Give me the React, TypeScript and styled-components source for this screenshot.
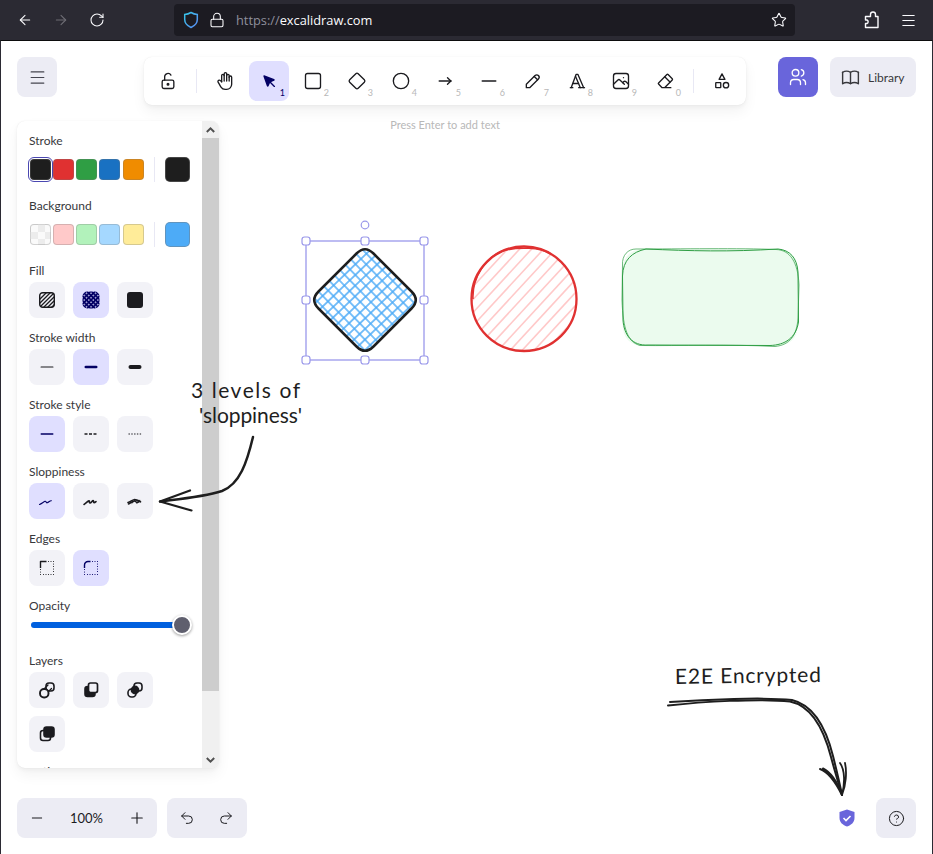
import React from "react"
import styled, { createGlobalStyle } from "styled-components"
import { ArrowLeft, ArrowRight, Lock, Menu, Minus, Plus, RotateCw, Star, Undo2, Redo2, CircleHelp } from "lucide-react"

const GlobalStyle = createGlobalStyle`
  html, body {
    margin: 0;
    padding: 0;
    background: #fff;
  }
  * {
    box-sizing: border-box;
  }
`

const Page = styled.div`
  position: relative;
  width: 933px;
  height: 854px;
  overflow: hidden;
  display: flex;
  flex-direction: column;
  font-family: "Lato", "Noto Sans", sans-serif;
  color: #1b1b1f;
`

/* browser chrome */
const BrowserBar = styled.div`
  flex: none;
  height: 40px;
  background: #2b2a33;
  display: flex;
  align-items: center;
  padding: 0 16px 0 17px;
`

const NavIcon = styled.span<{ $dim?: boolean; $space?: number; $lead?: number }>`
  display: flex;
  width: 16px;
  height: 16px;
  margin-left: ${(p) => p.$lead ?? 0}px;
  margin-right: ${(p) => p.$space ?? 20}px;
  color: ${(p) => (p.$dim ? "#6e6d75" : "#fbfbfe")};
`

const UrlBox = styled.div`
  width: 621px;
  height: 32px;
  padding: 0 8px 0 9px;
  border-radius: 4px;
  background: #1c1b22;
  display: flex;
  align-items: center;
  font-family: "Open Sans", sans-serif;
  font-size: 12.8px;
`

const UrlScheme = styled.span`
  color: #8f8f9d;
`

const UrlHost = styled.span`
  color: #fbfbfe;
`

const UrlText = styled.div`
  margin-left: 11px;
  flex: 1;
`

const BarRight = styled.div`
  margin-left: auto;
  display: flex;
  align-items: center;
  gap: 19px;
  color: #fbfbfe;
`

/* stage */
const Stage = styled.div`
  flex: 1;
  min-height: 0;
  display: flex;
  flex-direction: column;
  padding: 16px;
  background: #fff;
  border-top: 1px solid #0c0c0d;
  border-left: 1px solid #2b2a33;
  border-right: 1px solid #2b2a33;
`

const TopRow = styled.div`
  flex: none;
  height: 48px;
  display: flex;
  align-items: flex-start;
`

const SquareButton = styled.div<{ $primary?: boolean }>`
  width: 40px;
  height: 40px;
  border-radius: 8px;
  display: flex;
  align-items: center;
  justify-content: center;
  background: ${(p) => (p.$primary ? "#6965db" : "#ececf4")};
  color: ${(p) => (p.$primary ? "#fff" : "#1b1b1f")};
`

const ToolbarColumn = styled.div`
  height: 48px;
  margin-left: 87px;
  display: flex;
  flex-direction: column;
  align-items: center;
`

const Toolbar = styled.div`
  flex: none;
  height: 48px;
  padding: 4px;
  display: flex;
  align-items: center;
  gap: 4px;
  background: #fff;
  border-radius: 8px;
  box-shadow: 0 0 1px rgba(0, 0, 0, 0.1), 0 2px 4px rgba(0, 0, 0, 0.04), 0 7px 14px rgba(0, 0, 0, 0.05);
`

const ToolDivider = styled.div`
  width: 1px;
  height: 24px;
  margin: 0 4px;
  background: #e8e8f4;
`

const ToolButton = styled.div<{ $active?: boolean }>`
  position: relative;
  width: 40px;
  height: 40px;
  border-radius: 8px;
  display: flex;
  align-items: center;
  justify-content: center;
  background: ${(p) => (p.$active ? "#e0dfff" : "transparent")};
  color: ${(p) => (p.$active ? "#030064" : "#1b1b1f")};
`

const KeyHint = styled.span<{ $active?: boolean }>`
  position: absolute;
  right: 4px;
  bottom: 3px;
  font-size: 9px;
  line-height: 10px;
  color: ${(p) => (p.$active ? "#030064" : "#b8b8b8")};
`

const Hint = styled.div`
  flex: none;
  margin-top: 13px;
  font-size: 11px;
  line-height: 14px;
  color: #b8b8b8;
`

const RightTools = styled.div`
  margin-left: auto;
  display: flex;
  gap: 12px;
`

const LibraryButton = styled.div`
  width: 86px;
  height: 40px;
  padding-left: 10px;
  border-radius: 8px;
  background: #ececf4;
  display: flex;
  align-items: center;
  gap: 7px;
  font-size: 12px;
  color: #38383c;
`

/* properties panel */
const Panel = styled.div`
  flex: none;
  width: 202px;
  height: 647px;
  margin-top: 16px;
  border-radius: 8px;
  display: flex;
  overflow: hidden;
  background: #fff;
  box-shadow: 0 0 1px rgba(0, 0, 0, 0.1), 0 2px 4px rgba(0, 0, 0, 0.04), 0 7px 14px rgba(0, 0, 0, 0.05);
`

const PanelBody = styled.div`
  flex: 1;
  min-width: 0;
  padding: 12px 12px 0;
  overflow: hidden;
`

const Section = styled.div`
  margin-bottom: 12px;
`

const Label = styled.div`
  height: 16px;
  margin-bottom: 3px;
  font-size: 12px;
  line-height: 16px;
  color: #38383c;
`

const SwatchRow = styled.div`
  height: 34px;
  padding-left: 0.5px;
  display: flex;
  align-items: center;
`

const Swatches = styled.div`
  display: flex;
  gap: 2.3px;
`

const Swatch = styled.div<{ $color: string; $selected?: boolean }>`
  width: 21px;
  height: 21px;
  border-radius: 4px;
  background: ${(p) => p.$color};
  border: 1px solid rgba(120, 120, 120, 0.3);
  outline: ${(p) => (p.$selected ? "1px solid #4a47b1" : "none")};
  outline-offset: 1px;
`

const CheckerSwatch = styled(Swatch)`
  background-color: #fff;
  background-image: conic-gradient(#ececec 25%, #fafafa 0 50%, #ececec 0 75%, #fafafa 0);
  background-size: 14px 14px;
`

const SwatchDivider = styled.div`
  width: 1px;
  height: 25px;
  margin: 0 9.5px 0 10.5px;
  background: #e8e8f4;
`

const CurrentColor = styled.div<{ $color: string }>`
  width: 25px;
  height: 25px;
  border-radius: 5px;
  background: ${(p) => p.$color};
  border: 1px solid rgba(120, 120, 120, 0.45);
`

const ButtonRow = styled.div`
  display: flex;
  flex-wrap: wrap;
  gap: 8px;
  width: 130px;
`

const OptionButton = styled.div<{ $active?: boolean }>`
  width: 36px;
  height: 36px;
  border-radius: 8px;
  display: flex;
  align-items: center;
  justify-content: center;
  background: ${(p) => (p.$active ? "#e0dfff" : "#f2f2f7")};
  color: ${(p) => (p.$active ? "#030064" : "#1b1b1f")};
`

const SliderRow = styled.div`
  height: 24px;
  padding: 5px 8px 0 2px;
`

const SliderTrack = styled.div`
  width: 151px;
  height: 6px;
  border-radius: 3px;
  background: #0060df;
  display: flex;
  align-items: center;
  justify-content: flex-end;
`

const SliderThumb = styled.div`
  flex: none;
  width: 20px;
  height: 20px;
  margin-right: -10px;
  border-radius: 50%;
  background: #5f5f6e;
  border: 2px solid #fff;
  box-shadow: 0 1px 3px rgba(0, 0, 0, 0.4);
`

const ScrollBar = styled.div`
  flex: none;
  width: 17px;
  display: flex;
  flex-direction: column;
  background: #f0f0f0;
`

const ScrollArrow = styled.div`
  flex: none;
  height: 17px;
  display: flex;
  align-items: center;
  justify-content: center;
  color: #505050;
`

const ScrollThumb = styled.div`
  flex: none;
  height: 553px;
  background: #cdcdcd;
`

const ScrollRest = styled.div`
  flex: 1;
`

/* bottom bar */
const BottomRow = styled.div`
  flex: none;
  margin-top: auto;
  display: flex;
  align-items: center;
`

const ActionGroup = styled.div<{ $width: number; $right: number }>`
  width: ${(p) => p.$width}px;
  height: 40px;
  margin-right: 10px;
  border-radius: 8px;
  background: #ececf4;
  display: flex;
  align-items: center;
  justify-content: space-between;
  padding: 0 ${(p) => p.$right}px 0 12px;
  color: #1b1b1f;
`

const ZoomValue = styled.span`
  font-size: 13px;
  color: #1b1b1f;
`

const BottomRight = styled.div`
  margin-left: auto;
  display: flex;
  align-items: center;
  gap: 21px;
`

/* free canvas on top of everything */
const Sketch = styled.svg`
  position: absolute;
  top: 0;
  left: 0;
  width: 933px;
  height: 854px;
  pointer-events: none;
`

const Scribble = styled.text`
  font-family: "Lato", "Noto Sans", sans-serif;
  font-size: 21px;
  fill: #1e1e1e;
`

const Glyph = styled.svg.attrs<{ $size?: number; viewBox?: string }>((p) => ({
  viewBox: p.viewBox ?? "0 0 24 24",
  width: p.$size ?? 20,
  height: p.$size ?? 20,
}))<{ $size?: number }>`
  display: block;
  flex: none;
  fill: none;
  stroke: currentColor;
  stroke-width: 1.6;
  stroke-linecap: round;
  stroke-linejoin: round;
`

const tools: { key?: string; active?: boolean; icon: React.ReactNode }[] = [
  {
    icon: (
      <>
        <path d="M8 13v-7.5a1.5 1.5 0 0 1 3 0v6.5" />
        <path d="M11 5.5v-2a1.5 1.5 0 1 1 3 0v8.5" />
        <path d="M14 5.5a1.5 1.5 0 0 1 3 0v6.5" />
        <path d="M17 7.5a1.5 1.5 0 0 1 3 0v8.5a6 6 0 0 1 -6 6h-2h.208a6 6 0 0 1 -5.012 -2.7a69.74 69.74 0 0 1 -.196 -.3c-.312 -.479 -1.407 -2.388 -3.286 -5.728a1.5 1.5 0 0 1 .536 -2.022a1.867 1.867 0 0 1 2.28 .28l1.47 1.47" />
      </>
    ),
  },
  {
    key: "1",
    active: true,
    icon: (
      <>
        <path fill="currentColor" d="M6 6l4.153 11.793a.365 .365 0 0 0 .331 .207a.366 .366 0 0 0 .332 -.207l2.184 -4.793l4.787 -1.994a.355 .355 0 0 0 .213 -.323a.355 .355 0 0 0 -.213 -.323l-11.787 -4.36z" />
        <path d="M13.5 13.5l5 5" />
      </>
    ),
  },
  { key: "2", icon: <rect x="3" y="3" width="18" height="18" rx="2.5" /> },
  { key: "3", icon: <path d="M10.6 3.2l-7.4 7.4a2 2 0 0 0 0 2.8l7.4 7.4a2 2 0 0 0 2.8 0l7.4 -7.4a2 2 0 0 0 0 -2.8l-7.4 -7.4a2 2 0 0 0 -2.8 0z" /> },
  { key: "4", icon: <circle cx="12" cy="12" r="9.2" /> },
  {
    key: "5",
    icon: (
      <>
        <path d="M5 12h14" />
        <path d="M15 16l4 -4" />
        <path d="M15 8l4 4" />
      </>
    ),
  },
  { key: "6", icon: <path d="M4 12h16" strokeWidth="2" /> },
  {
    key: "7",
    icon: (
      <>
        <path d="M4 20h4l10.5 -10.5a2.8 2.8 0 0 0 -4 -4l-10.5 10.5v4" />
        <path d="M13.5 6.5l4 4" />
      </>
    ),
  },
  {
    key: "8",
    icon: (
      <>
        <path d="M4 20l3 0" />
        <path d="M14 20l7 0" />
        <path d="M6.9 15l6.9 0" />
        <path d="M10.2 6.3l5.8 13.7" />
        <path d="M5 20l6 -16l2 0l7 16" />
      </>
    ),
  },
  {
    key: "9",
    icon: (
      <>
        <path d="M15 8h.01" />
        <rect x="3" y="3" width="18" height="18" rx="3" />
        <path d="M3 16l5 -5c.928 -.893 2.072 -.893 3 0l5 5" />
        <path d="M14 14l1 -1c.928 -.893 2.072 -.893 3 0l3 3" />
      </>
    ),
  },
  {
    key: "0",
    icon: (
      <>
        <path d="M19 20h-10.5l-4.21 -4.3a1 1 0 0 1 0 -1.41l10 -10a1 1 0 0 1 1.41 0l5 5a1 1 0 0 1 0 1.41l-9.2 9.3" />
        <path d="M18 13.3l-6.3 -6.3" />
      </>
    ),
  },
]

const HachureIcon = () => (
  <Glyph $size={16} viewBox="0 0 16 16">
    <clipPath id="hachure-box">
      <rect x="0.5" y="0.5" width="15" height="15" rx="3" />
    </clipPath>
    <g clipPath="url(#hachure-box)" strokeWidth="1.3">
      {[-8, -4, 0, 4, 8, 12].map((o) => (
        <path key={o} d={`M${o} 16L${o + 16} 0`} />
      ))}
    </g>
    <rect x="0.7" y="0.7" width="14.6" height="14.6" rx="3" strokeWidth="1.4" />
  </Glyph>
)

const CrossIcon = () => (
  <Glyph $size={18} viewBox="0 0 18 18">
    <pattern id="cross-dots" width="3.2" height="3.2" patternUnits="userSpaceOnUse" patternTransform="rotate(45)">
      <rect width="3.2" height="3.2" fill="#030064" stroke="none" />
      <circle cx="1.6" cy="1.6" r="0.75" fill="#dcdcff" stroke="none" />
    </pattern>
    <rect x="0.5" y="0.5" width="17" height="17" rx="5" fill="url(#cross-dots)" stroke="none" />
  </Glyph>
)

const SolidIcon = () => (
  <Glyph $size={16} viewBox="0 0 16 16">
    <rect x="0" y="0" width="16" height="16" rx="3" fill="currentColor" stroke="none" />
  </Glyph>
)

const LineIcon = ({ width, dash }: { width: number; dash?: string }) => {
  const inset = dash ? 3.5 : 3.5 + width / 2
  return (
    <Glyph viewBox="0 0 20 20">
      <path d={`M${inset} 10H${20 - inset}`} strokeWidth={width} strokeDasharray={dash} strokeLinecap={dash ? "butt" : "round"} />
    </Glyph>
  )
}

const SloppyIcon = ({ level }: { level: number }) => (
  <Glyph viewBox="0 0 20 20" strokeWidth="1.2">
    {level === 0 && <path d="M2.5 13.5c2 -.8 4 -2.6 5.5 -3.2c1.4 -.4 .8 1.9 2.2 1.5c1.6 -.5 2.5 -2.2 4.2 -2" strokeWidth="1.1" />}
    {level === 1 && <path d="M3 13.5c2 -1 3.5 -3.4 5 -3.8c1 0 -.6 2.4 1.3 2.2c1.4 -.2 2 -2.6 3 -2.2c.6 .5 -.2 1.7 .7 1.9c.7 0 1.4 -.5 2 -1" strokeWidth="1.6" />}
    {level === 2 && (
      <>
        <path d="M3 11.5c2.5 -.6 4.2 -2.6 6 -2.8c1.8 -.2 3 .2 6 1.6" />
        <path d="M3.5 13c2 -1 4 -3 6 -3c1.8 0 1.4 2 3 1.4c1 -.4 1.6 -1.4 3 -.6" />
        <path d="M7 12.2l3.5 -3.4M12 12.2l2.2 -3" strokeWidth="1" />
      </>
    )}
  </Glyph>
)

const EdgeIcon = ({ round }: { round?: boolean }) => (
  <Glyph viewBox="0 0 20 20">
    <path d="M11.5 3.5h.01M14 3.5h.01M16.5 3.5h.01M16.5 6h.01M16.5 8.5h.01M16.5 11h.01M16.5 13.5h.01M16.5 16.5h.01M14 16.5h.01M11.5 16.5h.01M9 16.5h.01M6.5 16.5h.01M3.5 16.5h.01M3.5 14h.01M3.5 11.5h.01" strokeWidth="1.2" />
    <path d={round ? "M3.5 10v-3a3.5 3.5 0 0 1 3.5 -3.5h2.5" : "M3.5 10v-6.5h6"} strokeWidth="1.4" strokeLinecap="butt" />
  </Glyph>
)

const LayerIcon = ({ kind }: { kind: number }) => (
  <Glyph viewBox="0 0 20 20">
    {kind === 0 && (
      <>
        <rect x="9" y="3" width="8" height="8" rx="3" />
        <path d="M11 5l-5 5M14.5 8.5l-5 5" strokeWidth="1.3" />
        <rect x="3" y="9" width="8.5" height="8.5" rx="4" fill="#f2f2f7" strokeWidth="1.9" />
      </>
    )}
    {kind === 1 && (
      <>
        <rect x="4" y="6.5" width="10" height="10" rx="2.5" fill="currentColor" />
        <rect x="7.5" y="3" width="9" height="9.5" rx="2" fill="#f2f2f7" strokeWidth="1.7" />
      </>
    )}
    {kind === 2 && (
      <>
        <rect x="3" y="9" width="8" height="8" rx="3.5" fill="#f2f2f7" />
        <rect x="9" y="3" width="8" height="8" rx="3" fill="#f2f2f7" />
        <circle cx="10" cy="10" r="4.4" fill="currentColor" stroke="none" />
      </>
    )}
    {kind === 3 && (
      <>
        <rect x="3.5" y="6.5" width="10" height="10" rx="2.5" />
        <rect x="7" y="3" width="10" height="10" rx="2.5" fill="currentColor" />
      </>
    )}
  </Glyph>
)

const Chevron = ({ up }: { up?: boolean }) => (
  <svg width="9" height="6" viewBox="0 0 9 6" fill="none" stroke="currentColor" strokeWidth="2">
    <path d={up ? "M0.8 5L4.5 1.4L8.2 5" : "M0.8 1L4.5 4.6L8.2 1"} />
  </svg>
)

const strokeColors = ["#e03131", "#2f9e44", "#1971c2", "#f08c00"]
const backColors = ["#ffc9c9", "#b2f2bb", "#a5d8ff", "#ffec99"]
const handles = [
  [306, 241],
  [365, 241],
  [424, 241],
  [306, 300],
  [424, 300],
  [306, 360],
  [365, 360],
  [424, 360],
]
const hachure = Array.from({ length: 22 }, (_, i) => i)

const App = () => {
  return (
    <Page>
      <GlobalStyle />
      <BrowserBar>
        <NavIcon><ArrowLeft size={16} strokeWidth={1.6} /></NavIcon>
        <NavIcon $dim><ArrowRight size={16} strokeWidth={1.6} /></NavIcon>
        <NavIcon $space={69}><RotateCw size={16} strokeWidth={1.6} /></NavIcon>
        <UrlBox>
          <svg width="16" height="18" viewBox="0 0 16 18" fill="none" strokeWidth="1.5">
            <linearGradient id="tracking" x1="0" y1="0" x2="1" y2="1">
              <stop offset="0" stopColor="#35c5e8" />
              <stop offset="1" stopColor="#5b8cf5" />
            </linearGradient>
            <path d="M8 1.5c2 1.2 4 1.8 6.3 2v5c0 3.8 -2.8 6.4 -6.3 8c-3.5 -1.6 -6.3 -4.2 -6.3 -8v-5c2.3 -.2 4.3 -.8 6.3 -2z" stroke="url(#tracking)" />
          </svg>
          <NavIcon $space={0} $lead={10}><Lock size={16} strokeWidth={1.6} /></NavIcon>
          <UrlText>
            <UrlScheme>https://</UrlScheme>
            <UrlHost>excalidraw.com</UrlHost>
          </UrlText>
          <Star size={16} color="#fbfbfe" strokeWidth={1.6} />
        </UrlBox>
        <BarRight>
          <svg width="18" height="20" viewBox="0 0 18 20" fill="none" stroke="currentColor" strokeWidth="1.4" strokeLinejoin="round">
            <path d="M2.5 6.5h5v-2a2.5 2.5 0 0 1 5 0v2h2.5v11h-12.500v-4h1.5a1.9 1.9 0 0 0 0 -3.500h-1.5z" />
          </svg>
          <Menu size={17} strokeWidth={1.6} />
        </BarRight>
      </BrowserBar>

      <Stage>
        <TopRow>
          <SquareButton><Menu size={19} strokeWidth={1.5} color="#45454f" /></SquareButton>
          <ToolbarColumn>
            <Toolbar>
              <ToolButton>
                <Glyph>
                  <rect x="5" y="11" width="14" height="10" rx="2" />
                  <circle cx="12" cy="16" r="1" fill="currentColor" />
                  <path d="M8 11v-4a4 4 0 0 1 7.5 -2" />
                </Glyph>
              </ToolButton>
              <ToolDivider />
              {tools.map((t, i) => (
                <ToolButton key={i} $active={t.active}>
                  <Glyph>{t.icon}</Glyph>
                  {t.key && <KeyHint $active={t.active}>{t.key}</KeyHint>}
                </ToolButton>
              ))}
              <ToolDivider />
              <ToolButton>
                <Glyph>
                  <path d="M12 3.5l3.5 6.5h-7z" />
                  <rect x="4.5" y="14" width="6" height="6" rx="0.5" />
                  <circle cx="16.8" cy="17" r="3.2" />
                </Glyph>
              </ToolButton>
            </Toolbar>
            <Hint>Press Enter to add text</Hint>
          </ToolbarColumn>
          <RightTools>
            <SquareButton $primary>
              <Glyph>
                <circle cx="9" cy="7" r="4" />
                <path d="M3 21v-2a4 4 0 0 1 4 -4h4a4 4 0 0 1 4 4v2" />
                <path d="M16 3.13a4 4 0 0 1 0 7.75" />
                <path d="M21 21v-2a4 4 0 0 0 -3 -3.85" />
              </Glyph>
            </SquareButton>
            <LibraryButton>
              <Glyph $size={21}>
                <path d="M3 19a9 9 0 0 1 9 0a9 9 0 0 1 9 0" />
                <path d="M3 6a9 9 0 0 1 9 0a9 9 0 0 1 9 0" />
                <path d="M3 6v13" />
                <path d="M12 6v13" />
                <path d="M21 6v13" />
              </Glyph>
              Library
            </LibraryButton>
          </RightTools>
        </TopRow>

        <Panel>
          <PanelBody>
            <Section>
              <Label>Stroke</Label>
              <SwatchRow>
                <Swatches>
                  <Swatch $color="#1e1e1e" $selected />
                  {strokeColors.map((c) => (
                    <Swatch key={c} $color={c} />
                  ))}
                </Swatches>
                <SwatchDivider />
                <CurrentColor $color="#1e1e1e" />
              </SwatchRow>
            </Section>
            <Section>
              <Label>Background</Label>
              <SwatchRow>
                <Swatches>
                  <CheckerSwatch $color="#fff" />
                  {backColors.map((c) => (
                    <Swatch key={c} $color={c} />
                  ))}
                </Swatches>
                <SwatchDivider />
                <CurrentColor $color="#4dabf7" />
              </SwatchRow>
            </Section>
            <Section>
              <Label>Fill</Label>
              <ButtonRow>
                <OptionButton><HachureIcon /></OptionButton>
                <OptionButton $active><CrossIcon /></OptionButton>
                <OptionButton><SolidIcon /></OptionButton>
              </ButtonRow>
            </Section>
            <Section>
              <Label>Stroke width</Label>
              <ButtonRow>
                <OptionButton><LineIcon width={1.2} /></OptionButton>
                <OptionButton $active><LineIcon width={2.6} /></OptionButton>
                <OptionButton><LineIcon width={4} /></OptionButton>
              </ButtonRow>
            </Section>
            <Section>
              <Label>Stroke style</Label>
              <ButtonRow>
                <OptionButton $active><LineIcon width={1.4} /></OptionButton>
                <OptionButton><LineIcon width={1.4} dash="3 1.5" /></OptionButton>
                <OptionButton><LineIcon width={1.2} dash="1.4 1.4" /></OptionButton>
              </ButtonRow>
            </Section>
            <Section>
              <Label>Sloppiness</Label>
              <ButtonRow>
                <OptionButton $active><SloppyIcon level={0} /></OptionButton>
                <OptionButton><SloppyIcon level={1} /></OptionButton>
                <OptionButton><SloppyIcon level={2} /></OptionButton>
              </ButtonRow>
            </Section>
            <Section>
              <Label>Edges</Label>
              <ButtonRow>
                <OptionButton><EdgeIcon /></OptionButton>
                <OptionButton $active><EdgeIcon round /></OptionButton>
              </ButtonRow>
            </Section>
            <Section>
              <Label>Opacity</Label>
              <SliderRow>
                <SliderTrack>
                  <SliderThumb />
                </SliderTrack>
              </SliderRow>
            </Section>
            <Section>
              <Label>Layers</Label>
              <ButtonRow>
                <OptionButton><LayerIcon kind={0} /></OptionButton>
                <OptionButton><LayerIcon kind={1} /></OptionButton>
                <OptionButton><LayerIcon kind={2} /></OptionButton>
                <OptionButton><LayerIcon kind={3} /></OptionButton>
              </ButtonRow>
            </Section>
            <Section>
              <Label>Actions</Label>
            </Section>
          </PanelBody>
          <ScrollBar>
            <ScrollArrow><Chevron up /></ScrollArrow>
            <ScrollThumb />
            <ScrollRest />
            <ScrollArrow><Chevron /></ScrollArrow>
          </ScrollBar>
        </Panel>

        <BottomRow>
          <ActionGroup $width={140} $right={11}>
            <Minus size={16} strokeWidth={1.5} />
            <ZoomValue>100%</ZoomValue>
            <Plus size={18} strokeWidth={1.5} />
          </ActionGroup>
          <ActionGroup $width={80} $right={13}>
            <Undo2 size={16} strokeWidth={1.5} />
            <Redo2 size={16} strokeWidth={1.5} />
          </ActionGroup>
          <BottomRight>
            <svg width="16" height="18" viewBox="0 0 16 18">
              <path d="M8 .5l7.5 2.5v6c0 4.5 -3.4 7 -7.5 8.5c-4.1 -1.5 -7.5 -4 -7.5 -8.5v-6z" fill="#6965db" />
              <path d="M4.5 9l2.5 2.5l4.5 -4.500" fill="none" stroke="#fff" strokeWidth="1.6" />
            </svg>
            <SquareButton><CircleHelp size={17} strokeWidth={1.4} /></SquareButton>
          </BottomRight>
        </BottomRow>
      </Stage>

      <Sketch viewBox="0 0 933 854" fill="none">
        <defs>
          <pattern id="cross-hatch" width="7.6" height="7.6" patternUnits="userSpaceOnUse" patternTransform="rotate(46)">
            <path d="M0 3.8H7.6M3.8 0V7.6" stroke="#4dabf7" strokeWidth="1.5" />
          </pattern>
          <clipPath id="round-clip">
            <circle cx="524" cy="299" r="52" />
          </clipPath>
        </defs>

        {/* diamond */}
        <path
          d="M356.5 253.5Q365 245 373.5 253.5L411.5 291.5Q420 300 411.5 308.5L373.5 346.5Q365 355 356.5 346.5L318.5 308.5Q310 300 318.5 291.5Z"
          fill="url(#cross-hatch)"
          stroke="#1e1e1e"
          strokeWidth="2.5"
        />
        {/* selection */}
        <rect x="306" y="241" width="118" height="119" stroke="#a8a6ee" strokeWidth="1.5" />
        {handles.map(([x, y]) => (
          <rect key={`${x}-${y}`} x={x - 4} y={y - 4} width="8" height="8" rx="2.5" fill="#fff" stroke="#9a98ea" strokeWidth="1.2" />
        ))}
        <circle cx="365" cy="225" r="3.8" fill="#fff" stroke="#9a98ea" strokeWidth="1.2" />

        {/* circle */}
        <g clipPath="url(#round-clip)" stroke="#ffc9c9" strokeWidth="1.6">
          {hachure.map((i) => (
            <path key={i} d={`M${372 + i * 12} 370L${492 + i * 12} 240`} />
          ))}
        </g>
        <path
          d="M524 246.5C553 246.5 576.5 270 576.5 299C576.5 328 553 351 524 351C495 351 471.5 328 471.5 299C471.5 270 495 246.5 524 246.5"
          stroke="#e03131"
          strokeWidth="2.3"
        />
        <path d="M473 299C472 278 486 256 504 250.5C518 247 540 247 551 254" stroke="#e03131" strokeWidth="1.5" />

        {/* rectangle */}
        <path d="M645 249H775Q798 249 798 272V323Q798 346 775 346H645Q622.5 346 622.5 323V272Q622.5 249 645 249Z" fill="#ebfbee" />
        <path
          d="M646 249C690 251 730 252 778 249C790 250 797 258 798 272L798.5 322C796 338 785 345 770 345.5L648 345C632 346 624 335 623 320L622.5 276C623 260 632 252 646 249Z"
          stroke="#2f9e44"
          strokeWidth="1"
        />
        <path
          d="M636 249C680 249 740 248 776 249.5C790 250 798 262 799 285L798 318C797 335 790 345 775 346.5C730 344 680 346 640 345.5C628 342 623 330 622 300L622.5 265C622 255 628 249 636 249Z"
          stroke="#2f9e44"
          strokeOpacity="0.7"
          strokeWidth="1"
        />

        {/* notes */}
        <Scribble x="191" y="398" textLength="109">3 levels of</Scribble>
        <Scribble x="199" y="423" textLength="103">'sloppiness'</Scribble>
        <Scribble x="675" y="684" textLength="146" transform="rotate(-0.8 675 684)">E2E Encrypted</Scribble>

        <g stroke="#1e1e1e" strokeLinecap="round" strokeLinejoin="round">
          <path d="M253 437C247 462 240 484 222 491C203 497 180 499 160 501.5" strokeWidth="2.5" />
          <path d="M190 490.5L160 501.5L191.5 510.5" strokeWidth="2.2" />
          <path d="M668 705.5C700 702 760 698 790 701.5C812 706 824 730 831 757C835 772 839 785 842 795" strokeWidth="2" />
          <path d="M670 702C705 699.5 765 697 792 700C813 705 826 728 833 756C837 772 840 785 842 795" strokeWidth="2" />
          <path d="M820 769C829 772 836 783 842 795M823 768.5C832 773 838 784 842 795" strokeWidth="2" />
          <path d="M840 763C845 770 845 783 842 795M845 763C847 772 846 785 842 795" strokeWidth="1.8" />
        </g>
      </Sketch>
    </Page>
  )
}

export default App
